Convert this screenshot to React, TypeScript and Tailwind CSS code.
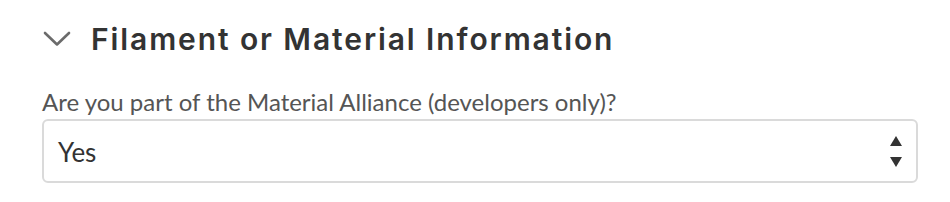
import React from "react";

export default function App() {
  return (
    <div className="w-[950px] h-[202px] bg-white pl-[42px] pr-[32px] pt-[22px]">
      <div className="flex items-center h-[34px]">
        <svg width="28" height="16" viewBox="0 0 28 16" className="ml-[1px] mr-[20px]">
          <polyline points="2,2 14,13.5 26,2" fill="none" stroke="#6b6b6b" strokeWidth="2.6" strokeLinecap="round" strokeLinejoin="round" />
        </svg>
        <h2 className="font-['Inter',sans-serif] font-semibold text-[30px] text-[#333333] tracking-[1.9px] leading-none">
          Filament or Material Information
        </h2>
      </div>
      <div className="mt-[31px] font-['Lato',sans-serif] text-[24px] text-[#555555] leading-[29px]">
        Are you part of the Material Alliance (developers only)?
      </div>
      <div className="mt-[3px] relative w-[876px] h-[64px] border-2 border-[#dadada] rounded-[6px] flex items-center pl-[14px]">
        <span className="font-['Lato',sans-serif] text-[26px] text-[#333333] mt-[2px]">Yes</span>
        <svg width="14" height="32" viewBox="0 0 14 32" className="absolute right-[13px] top-[14px]">
          <polygon points="7,1 13,11 1,11" fill="#333333" />
          <polygon points="1,22 13,22 7,32" fill="#333333" />
        </svg>
      </div>
    </div>
  );
}
